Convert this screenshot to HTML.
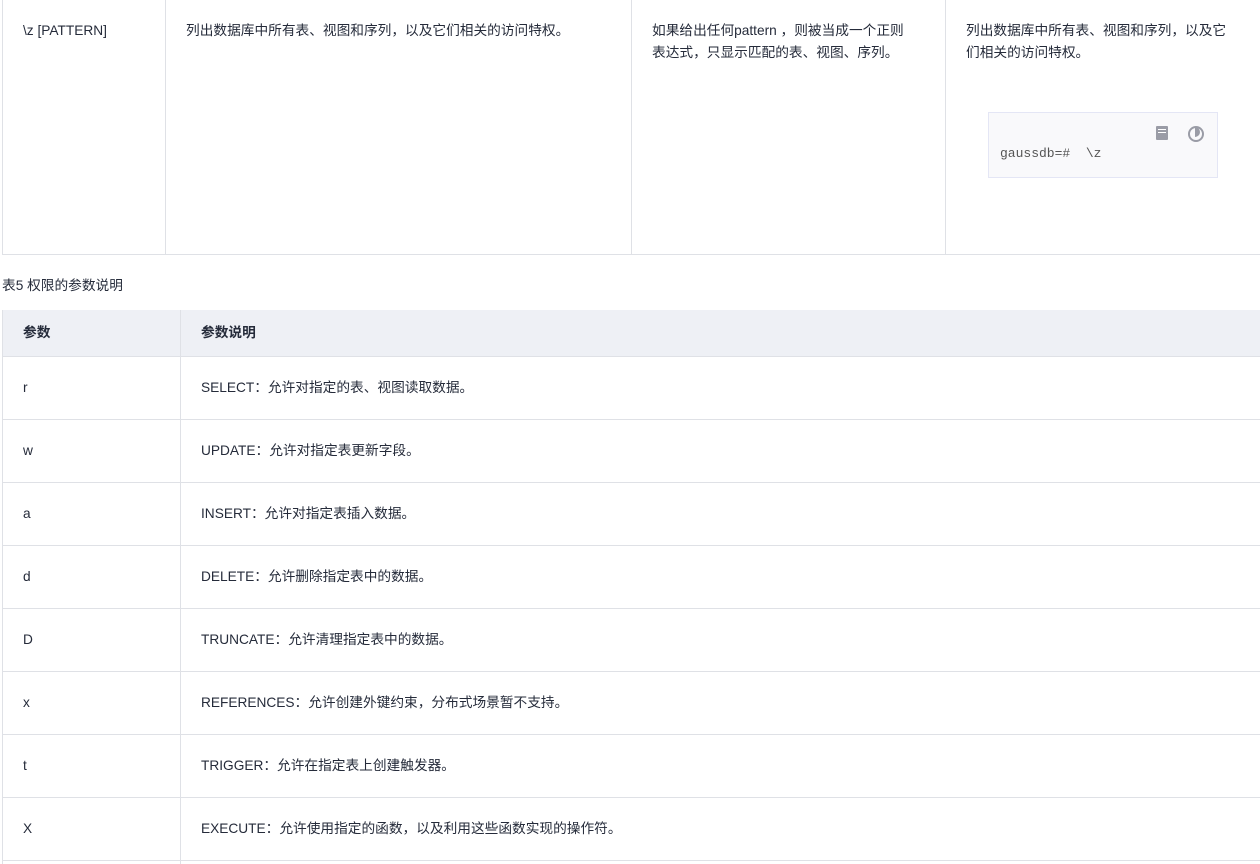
<!DOCTYPE html><html><head><meta charset="utf-8"><style>
body{margin:0;width:1260px;height:864px;overflow:hidden;background:#fff;font-family:"Liberation Sans","Noto Sans CJK SC",sans-serif;font-size:13.7px;color:#252b3a;position:relative}
.a{position:absolute}
.vl{position:absolute;width:1px;background:#dfe1e6}
.hl{position:absolute;height:1px;background:#dfe1e6}
.t{position:absolute;line-height:22px}
</style></head><body>
<div class="vl" style="left:2px;top:0;height:255px"></div>
<div class="vl" style="left:165px;top:0;height:255px"></div>
<div class="vl" style="left:631px;top:0;height:255px"></div>
<div class="vl" style="left:945px;top:0;height:255px"></div>
<div class="hl" style="left:2px;top:254px;width:1258px"></div>
<div class="t" style="left:23px;top:20px">\z [PATTERN]</div>
<div class="t" style="left:186px;top:20px">列出数据库中所有表、视图和序列，以及它们相关的访问特权。</div>
<div class="t" style="left:652px;top:20px;width:262px">如果给出任何pattern ，则被当成一个正则表达式，只显示匹配的表、视图、序列。</div>
<div class="t" style="left:966px;top:20px;width:270px">列出数据库中所有表、视图和序列，以及它们相关的访问特权。</div>
<div class="a" style="left:988px;top:112px;width:228px;height:64px;background:#f9f9fb;border:1px solid #e4e6f5"></div>
<div class="a" style="left:1156px;top:126px;width:12px;height:14px;background:#9a9ca6;border-radius:1px"></div>
<div class="a" style="left:1158px;top:129px;width:8px;height:1px;background:#fff"></div>
<div class="a" style="left:1158px;top:132px;width:8px;height:1px;background:#fff"></div>
<div class="a" style="left:1188px;top:126px;width:12px;height:12px;border:2px solid #9a9ca6;border-radius:50%"></div>
<div class="a" style="left:1190px;top:127px;width:10px;height:10px;border-radius:50%;background:#9a9ca6;clip-path:inset(0 0 0 50%)"></div>
<div class="t" style="left:1000px;top:143px;font-family:'Liberation Mono',monospace;font-size:13px;color:#555;white-space:pre">gaussdb=#  \z</div>
<div class="t" style="left:2px;top:275px">表5 权限的参数说明</div>
<div class="a" style="left:2px;top:310px;width:1258px;height:46px;background:#eef0f5"></div>
<div class="vl" style="left:2px;top:310px;height:554px"></div>
<div class="vl" style="left:180px;top:310px;height:554px"></div>
<div class="hl" style="left:2px;top:356px;width:1258px"></div>
<div class="hl" style="left:2px;top:419px;width:1258px"></div>
<div class="hl" style="left:2px;top:482px;width:1258px"></div>
<div class="hl" style="left:2px;top:545px;width:1258px"></div>
<div class="hl" style="left:2px;top:608px;width:1258px"></div>
<div class="hl" style="left:2px;top:671px;width:1258px"></div>
<div class="hl" style="left:2px;top:734px;width:1258px"></div>
<div class="hl" style="left:2px;top:797px;width:1258px"></div>
<div class="hl" style="left:2px;top:860px;width:1258px"></div>
<div class="t" style="left:23px;top:322px;font-weight:bold">参数</div>
<div class="t" style="left:201px;top:322px;font-weight:bold">参数说明</div>
<div class="t" style="left:23px;top:377px">r</div><div class="t" style="left:201px;top:377px">SELECT：允许对指定的表、视图读取数据。</div>
<div class="t" style="left:23px;top:440px">w</div><div class="t" style="left:201px;top:440px">UPDATE：允许对指定表更新字段。</div>
<div class="t" style="left:23px;top:503px">a</div><div class="t" style="left:201px;top:503px">INSERT：允许对指定表插入数据。</div>
<div class="t" style="left:23px;top:566px">d</div><div class="t" style="left:201px;top:566px">DELETE：允许删除指定表中的数据。</div>
<div class="t" style="left:23px;top:629px">D</div><div class="t" style="left:201px;top:629px">TRUNCATE：允许清理指定表中的数据。</div>
<div class="t" style="left:23px;top:692px">x</div><div class="t" style="left:201px;top:692px">REFERENCES：允许创建外键约束，分布式场景暂不支持。</div>
<div class="t" style="left:23px;top:755px">t</div><div class="t" style="left:201px;top:755px">TRIGGER：允许在指定表上创建触发器。</div>
<div class="t" style="left:23px;top:818px">X</div><div class="t" style="left:201px;top:818px">EXECUTE：允许使用指定的函数，以及利用这些函数实现的操作符。</div>
</body></html>
